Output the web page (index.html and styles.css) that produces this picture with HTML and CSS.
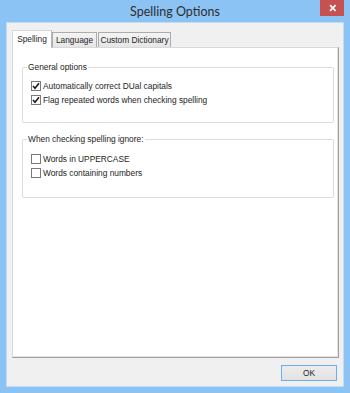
FILE: index.html
```html
<!DOCTYPE html>
<html>
<head>
<meta charset="utf-8">
<link rel="stylesheet" href="styles.css">
</head>
<body>
<div class="window">
  <div class="titlebar">
    <span class="spacer"></span>
    <span class="title">Spelling Options</span>
    <div class="close-wrap">
      <div class="close">
        <svg width="24" height="16" viewBox="0 0 24 16"><path d="M10 5.2 L15.6 10.8 M15.6 5.2 L10 10.8" stroke="#ffffff" stroke-width="1.7" fill="none"/></svg>
      </div>
    </div>
  </div>
  <div class="client">
    <div class="tabs">
      <div class="tab active tab-spelling">Spelling</div>
      <div class="tab tab-language">Language</div>
      <div class="tab tab-custom">Custom Dictionary</div>
    </div>
    <div class="panel">
      <div class="group group-general">
        <div class="group-label">General options</div>
        <div class="opt"><span class="cb"><svg width="8" height="8" viewBox="0 0 8 8"><path d="M1 4 L3 6.2 L7 1.2" stroke="#1a1a1a" stroke-width="1.6" fill="none"/></svg></span><span class="opt-text">Automatically correct DUal capitals</span></div>
        <div class="opt"><span class="cb"><svg width="8" height="8" viewBox="0 0 8 8"><path d="M1 4 L3 6.2 L7 1.2" stroke="#1a1a1a" stroke-width="1.6" fill="none"/></svg></span><span class="opt-text">Flag repeated words when checking spelling</span></div>
      </div>
      <div class="group group-ignore">
        <div class="group-label">When checking spelling ignore:</div>
        <div class="opt"><span class="cb"></span><span class="opt-text">Words in UPPERCASE</span></div>
        <div class="opt"><span class="cb"></span><span class="opt-text">Words containing numbers</span></div>
      </div>
    </div>
    <div class="footer"><div class="btn">OK</div></div>
  </div>
</div>
</body>
</html>
```
FILE: styles.css
```css
* { box-sizing: border-box; }
html, body { margin: 0; padding: 0; }
body {
  width: 350px;
  height: 393px;
  overflow: hidden;
  font-family: "Liberation Sans", Arial, sans-serif;
  font-size: 8.35px;
  color: #1e1e1e;
}
.window {
  width: 350px;
  height: 393px;
  background: #8bc3f4;
  display: flex;
  flex-direction: column;
}
.titlebar {
  height: 22px;
  display: grid;
  grid-template-columns: 1fr auto 1fr;
  align-items: start;
}
.title {
  font-family: "Lato", "Liberation Sans", sans-serif;
  font-size: 12.5px;
  color: #2e2e2e;
  line-height: 22px;
  padding-top: 1px;
}
.close-wrap {
  display: flex;
  justify-content: flex-end;
  padding-right: 6px;
}
.close {
  width: 24px;
  height: 16px;
  background: #c75050;
  display: flex;
}
.client {
  flex: 1;
  margin: 0 6px 6px 6px;
  border: 1px solid #c2dcf4;
  background: #f0f0f0;
  padding: 7px 4px 0 5px;
  display: flex;
  flex-direction: column;
}
.tabs {
  height: 18px;
  margin-bottom: -1px;
  display: flex;
  align-items: flex-end;
}
.tab {
  height: 15px;
  margin-bottom: 1px;
  border: 1px solid #acacac;
  border-bottom: none;
  background: linear-gradient(#f4f4f4, #e6e6e6);
  display: flex;
  align-items: center;
  justify-content: center;
  white-space: nowrap;
}
.tab.active {
  height: 18px;
  margin-bottom: 0;
  background: #ffffff;
  border-color: #d9d9d9;
  border-right-color: #b5b5b5;
  position: relative;
  z-index: 1;
  padding-bottom: 1px;
}
.tab-spelling { width: 40px; }
.tab-language { width: 45px; }
.tab-custom { width: 73px; margin-left: 1px; }
.panel {
  flex: 1;
  background: #ffffff;
  border: 1px solid;
  border-color: #d9d9d9 #a0a0a0 #a0a0a0 #d9d9d9;
  box-shadow: inset -1px -1px 0 #e3e3e3;
  padding: 19px 4px 0 9px;
}
.group {
  border: 1px solid #dcdcdc;
  border-radius: 2px;
  padding-left: 8px;
}
.group-general { padding-bottom: 15px; }
.group-ignore { margin-top: 16px; padding-bottom: 17px; }
.group-label {
  width: fit-content;
  margin: -6px 0 6px -4px;
  padding: 0 1px;
  line-height: 11px;
  background: #ffffff;
}
.group-ignore .group-label { margin-bottom: 7px; }
.opt {
  height: 14px;
  display: flex;
  align-items: center;
  white-space: nowrap;
}
.cb {
  width: 10px;
  height: 10px;
  border: 1px solid #7a7a7a;
  background: #ffffff;
  display: flex;
  align-items: center;
  justify-content: center;
  margin-right: 2px;
}
.footer {
  display: flex;
  justify-content: flex-end;
  padding: 7px 2px 5px 0;
}
.btn {
  width: 56px;
  height: 16px;
  border: 1px solid #6aaef0;
  background: linear-gradient(#ececec, #e2e2e2);
  display: flex;
  align-items: center;
  justify-content: center;
  color: #1e1e1e;
}
```
